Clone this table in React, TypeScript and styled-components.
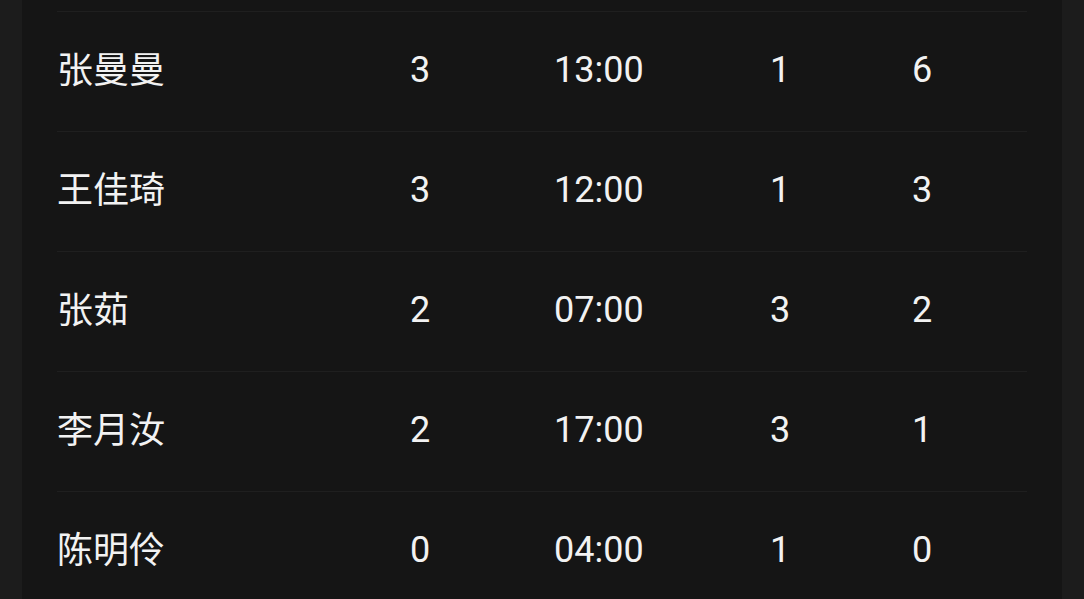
import React from "react";
import styled, { createGlobalStyle } from "styled-components";

const Global = createGlobalStyle`
  html, body {
    margin: 0;
    padding: 0;
    background: #1c1c1c;
    overflow: hidden;
  }
  body {
    font-family: Roboto, "Noto Sans CJK SC", sans-serif;
  }
`;

const Page = styled.div`
  width: 1084px;
  height: 599px;
  background: #1c1c1c;
  display: flex;
  padding-left: 22px;
  box-sizing: border-box;
  overflow: hidden;
`;

const Panel = styled.div`
  width: 1040px;
  background: #151515;
  padding: 11px 35px 0;
  box-sizing: border-box;
  display: flex;
  flex-direction: column;
`;

const Row = styled.div`
  display: grid;
  grid-template-columns: 353px 144px 216px 142px 1fr;
  align-items: center;
  height: 120px;
  flex: none;
  box-sizing: border-box;
  border-top: 1px solid #1f1f1f;
`;

const Cell = styled.div`
  font-size: 36px;
  line-height: 1;
  color: #f2f2f2;
  font-weight: 400;
  white-space: nowrap;
  margin-bottom: 4px;
`;

const NameCell = styled(Cell)`
  font-family: "Noto Sans CJK SC", sans-serif;
  margin-bottom: 10px;
`;

const rows = [
  { name: "张曼曼", a: "3", t: "13:00", b: "1", c: "6" },
  { name: "王佳琦", a: "3", t: "12:00", b: "1", c: "3" },
  { name: "张茹", a: "2", t: "07:00", b: "3", c: "2" },
  { name: "李月汝", a: "2", t: "17:00", b: "3", c: "1" },
  { name: "陈明伶", a: "0", t: "04:00", b: "1", c: "0" },
];

export default function App() {
  return (
    <>
      <Global />
      <Page>
        <Panel>
          {rows.map((r) => (
            <Row key={r.name}>
              <NameCell>{r.name}</NameCell>
              <Cell>{r.a}</Cell>
              <Cell>{r.t}</Cell>
              <Cell>{r.b}</Cell>
              <Cell>{r.c}</Cell>
            </Row>
          ))}
        </Panel>
      </Page>
    </>
  );
}
